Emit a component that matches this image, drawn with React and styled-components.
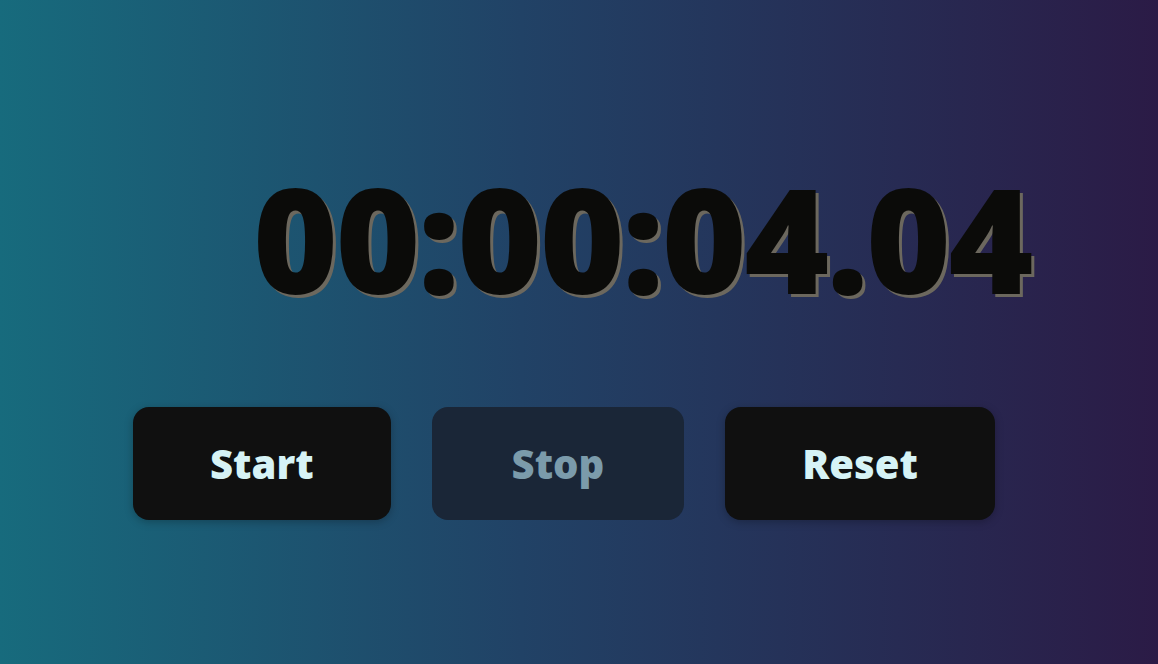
import React from 'react';
import styled, { createGlobalStyle } from 'styled-components';

const GlobalStyle = createGlobalStyle`
    html, body {
        margin: 0;
        padding: 0;
        height: 100%;
    }
    body {
        font-family: "Noto Sans", "Lato", sans-serif;
        background: linear-gradient(90deg, #176b7d 0%, #214266 45%, #2b1b46 100%);
        min-height: 664px;
    }
`;

function App() {
    return (
        <>
            <GlobalStyle />
            <Page>
                <Display>00:00:04.04</Display>
                <Controls>
                    <Button>Start</Button>
                    <Button disabled>Stop</Button>
                    <Button>Reset</Button>
                </Controls>
            </Page>
        </>
    );
}

const Page = styled.div`
    height: 664px;
    display: flex;
    flex-direction: column;
    padding-top: 148px;
    box-sizing: border-box;
`;

const Display = styled.h1`
    margin: 0 0 0 253px;
    font-size: 145px;
    font-weight: 900;
    line-height: 180px;
    color: #0b0b09;
    text-shadow: 3px 3px 0 #6c685e;
    letter-spacing: -2.5px;
    white-space: nowrap;
`;

const Controls = styled.div`
    display: flex;
    gap: 41px;
    margin-top: 79px;
    padding-left: 133px;
`;

const Button = styled.button`
    height: 113px;
    padding: 0 77px;
    border: none;
    border-radius: 16px;
    background: #101010;
    color: #d6f3f6;
    font-family: "Noto Sans", "Lato", sans-serif;
    font-size: 40px;
    font-weight: 900;
    box-shadow: 0 2px 8px rgba(0, 0, 0, 0.25);
    cursor: pointer;

    &:disabled {
        padding: 0 80px;
        background: #1a2637;
        color: #7b9bab;
        box-shadow: none;
        cursor: default;
    }
`;

export default App;
